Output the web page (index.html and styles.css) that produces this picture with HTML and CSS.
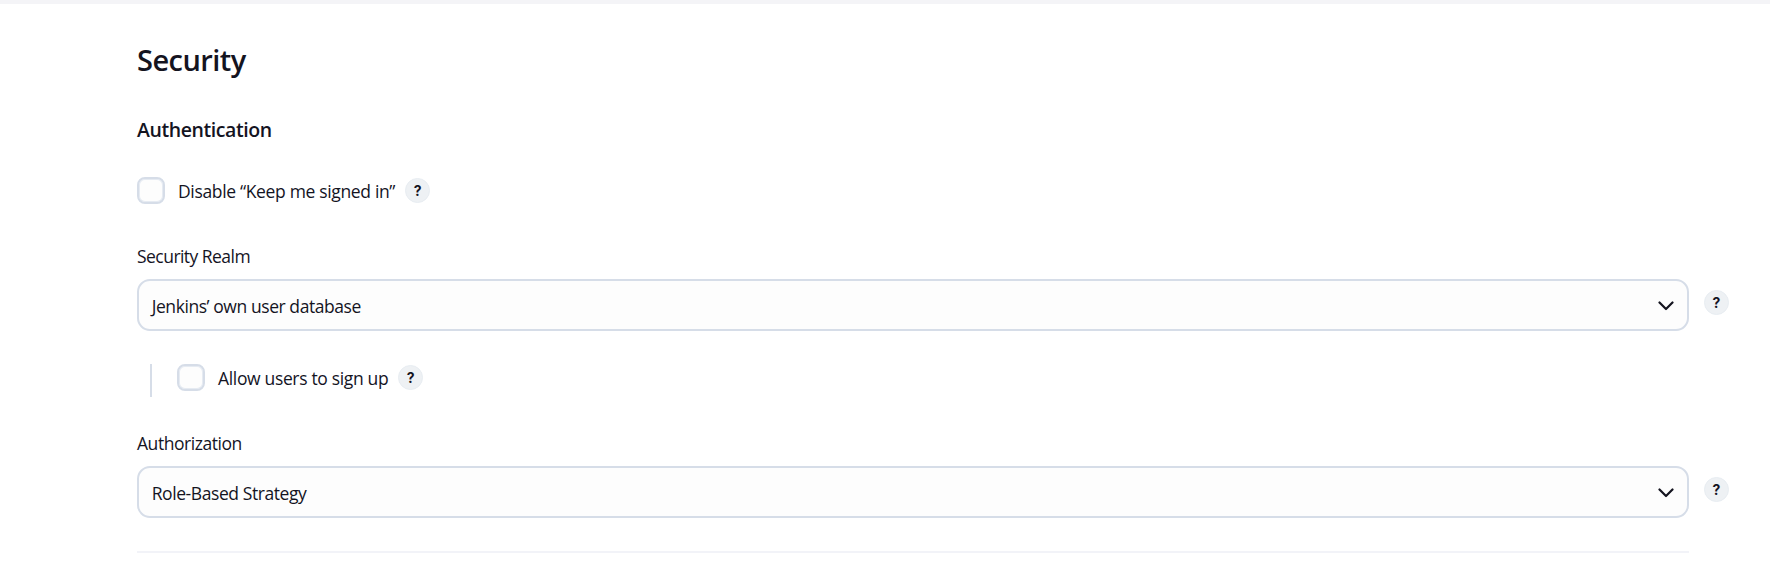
FILE: index.html
```html
<!DOCTYPE html>
<html lang="en">
<head>
<meta charset="utf-8">
<title>Security</title>
<link rel="stylesheet" href="styles.css">
</head>
<body>
<div class="topbar"></div>
<main class="content">
  <h1 class="title"><span class="t-title">Security</span></h1>
  <h2 class="subtitle"><span class="t-sub">Authentication</span></h2>
  <div class="check-row">
    <span class="checkbox"></span>
    <span class="label t-keep">Disable “Keep me signed in”</span>
    <span class="help">?</span>
  </div>
  <section class="field">
    <div class="field-label"><span class="t-realm">Security Realm</span></div>
    <div class="field-row">
      <div class="select">
        <span class="t-jenkins">Jenkins’ own user database</span>
        <svg class="chevron" width="16" height="10" viewBox="0 0 16 10"><path d="M1.5 1.5 8 8l6.5-6.5"/></svg>
      </div>
      <span class="help">?</span>
    </div>
  </section>
  <div class="nested">
    <div class="check-row">
      <span class="checkbox"></span>
      <span class="label t-allow">Allow users to sign up</span>
      <span class="help">?</span>
    </div>
  </div>
  <section class="field">
    <div class="field-label"><span class="t-auth">Authorization</span></div>
    <div class="field-row">
      <div class="select">
        <span class="t-role">Role-Based Strategy</span>
        <svg class="chevron" width="16" height="10" viewBox="0 0 16 10"><path d="M1.5 1.5 8 8l6.5-6.5"/></svg>
      </div>
      <span class="help">?</span>
    </div>
  </section>
  <hr class="divider">
</main>
</body>
</html>
```
FILE: styles.css
```css
* { box-sizing: border-box; }
body {
  margin: 0;
  height: 585px;
  overflow: hidden;
  background: #fff;
  color: #14141f;
  font: 400 17.5px/24px "Open Sans", "Noto Sans", sans-serif;
}
.topbar { height: 4px; background: #f4f4f7; }
.content { width: 1592px; margin-left: 137px; padding-top: 36px; }
.title { margin: 0; font-size: 29px; line-height: 40px; font-weight: 600; }
.subtitle { margin: 36px 0 33px; font-size: 19.5px; line-height: 28px; font-weight: 600; }
.check-row { display: flex; height: 28px; line-height: 28px; white-space: nowrap; }
.checkbox {
  width: 28px;
  height: 27px;
  margin-right: 13px;
  border: 2px solid #d6dde8;
  border-radius: 8px;
  background: #fdfdfd;
  box-shadow: inset 0 0 0 1px #e6ebf2;
}
.help {
  flex: none;
  width: 25px;
  height: 25px;
  border: 1px solid #e8edf2;
  border-radius: 50%;
  background: #eef1f4;
  font: 700 14px/23px Inter, sans-serif;
  text-align: center;
}
.check-row .help { margin: 1px 0 0 10px; }
.field { margin-top: 39px; }
.nested + .field { margin-top: 34px; }
.field-label { height: 24px; margin-bottom: 11px; }
.field-row { display: flex; gap: 15px; }
.field-row .help { margin-top: 11px; }
.select {
  display: flex;
  align-items: center;
  justify-content: space-between;
  width: 1552px;
  height: 52px;
  padding: 1px 13.5px 0 12.7px;
  border: 2px solid #d6dde8;
  border-radius: 13px;
  background: #fdfdfd;
}
.chevron { fill: none; stroke: #14141f; stroke-width: 2.2; stroke-linecap: round; stroke-linejoin: round; }
.nested { height: 33px; margin: 33px 0 0 13px; padding-left: 25px; border-left: 2px solid #d6dde8; }
.divider { width: 1552px; height: 2px; margin: 33px 0 0; border: 0; background: #f2f3f8; }
.t-title { letter-spacing: -.55px; }
.t-sub { letter-spacing: -.42px; }
.t-keep { letter-spacing: -.34px; }
.t-realm { letter-spacing: -.54px; }
.t-jenkins { letter-spacing: -.43px; }
.t-allow { letter-spacing: -.34px; }
.t-auth { letter-spacing: -.45px; }
.t-role { letter-spacing: -.42px; }
```
